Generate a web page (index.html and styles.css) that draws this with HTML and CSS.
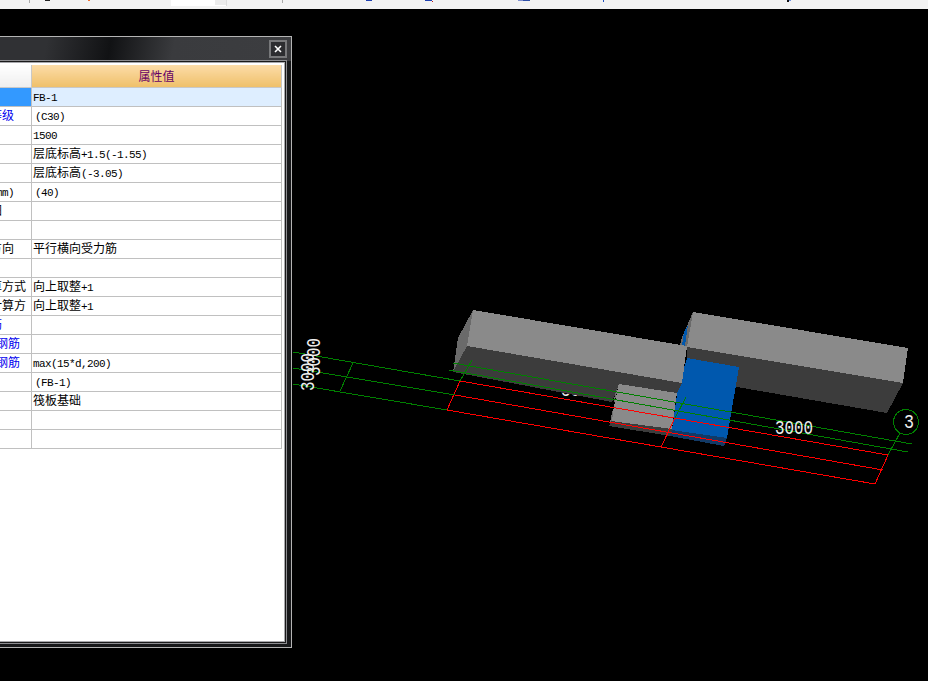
FILE: index.html
```html
<!DOCTYPE html>
<html lang="zh">
<head>
<meta charset="utf-8">
<title>属性编辑</title>
<link rel="stylesheet" href="styles.css">
</head>
<body>
<div class="toolbar">
  <svg class="toolbar-bits" viewBox="0 0 928 9" width="928" height="9">
    <rect x="171" y="0" width="55" height="6" fill="#fff"/>
    <rect x="215" y="0" width="11" height="5" fill="#ececec"/>
    <rect x="226" y="0" width="1" height="6" fill="#ddd"/>
    <rect x="29" y="0" width="1" height="3" fill="#aaa"/>
    <rect x="282" y="0" width="1" height="3" fill="#aaa"/>
    <rect x="45" y="0" width="5" height="1" fill="#222"/>
    <rect x="88" y="0" width="2" height="1" fill="#f07030"/>
    <rect x="366" y="0" width="6" height="1" fill="#2040b0"/>
    <rect x="425" y="0" width="7" height="1" fill="#2040b0"/>
    <rect x="432" y="1" width="1" height="1" fill="#c02020"/>
    <rect x="518" y="0" width="5" height="1" fill="#8090d0"/>
    <rect x="523" y="0" width="7" height="1" fill="#3050a8"/>
    <rect x="603" y="0" width="1" height="2" fill="#2050c0"/>
    <rect x="787" y="0" width="2" height="2" fill="#111"/>
    <rect x="789" y="0" width="2" height="1" fill="#7090e0"/>
  </svg>
</div>
<main class="viewport">
  <svg class="scene" viewBox="0 9 928 672" width="928" height="672">
    <text class="cad-text" x="561" y="396" textLength="38" lengthAdjust="spacingAndGlyphs">3000</text>
    <g class="aliased">
      <polygon fill="#3c3c3c" points="687,347 903,383 887,413 737,387 687,378"/>
      <polygon fill="#8a8a8a" points="693,312 908,348 903,383 687,347"/>
      <polygon fill="#6a6a6a" points="693,312 687,347 680,346 681,340"/>
      <polygon fill="#0058ae" points="688,325 685,346 682,345 684,332"/>
      <polygon fill="#123a66" points="672,430 727,438 724,446 670,436"/>
      <polygon fill="#8a8a8a" points="619,383 677,392 672,429 611,421"/>
      <polygon fill="#707070" points="619,383 615,392 612,422 610,422"/>
      <polygon fill="#3c3c3c" points="611,421 672,429 670,436 609,426"/>
      <polygon fill="#0058ae" points="687,358 739,367 727,438 672,430 678,388"/>
      <polygon fill="#3c3c3c" points="467,346 682,383 677,393 619,384 612,402 453,372"/>
      <polygon fill="#8a8a8a" points="473,310 687,346 682,383 467,346"/>
      <polygon fill="#6a6a6a" points="473,310 467,346 453,372 458,338"/>
    </g>
    <g class="aliased lines-red">
      <line x1="460" y1="381" x2="888" y2="455"/>
      <line x1="455" y1="395" x2="883" y2="470"/>
      <line x1="447" y1="410" x2="875" y2="484"/>
      <line x1="460" y1="381" x2="447" y2="410"/>
      <line x1="675" y1="418" x2="661" y2="447"/>
      <line x1="888" y1="455" x2="875" y2="484"/>
    </g>
    <g class="aliased lines-green">
      <line x1="293" y1="352" x2="460" y2="381"/>
      <line x1="293" y1="368" x2="455" y2="395"/>
      <line x1="293" y1="384" x2="447" y2="410"/>
      <line x1="353" y1="363" x2="340" y2="391"/>
      <line x1="453" y1="363" x2="912" y2="444"/>
      <line x1="449" y1="370" x2="908" y2="452"/>
      <line x1="472" y1="360" x2="460" y2="381"/>
      <line x1="686" y1="397" x2="675" y2="418"/>
      <line x1="900" y1="433" x2="888" y2="455"/>
      <circle cx="906" cy="422" r="12.5" fill="none"/>
    </g>
    <text class="cad-text" x="775" y="434" textLength="38" lengthAdjust="spacingAndGlyphs">3000</text>
    <text class="cad-text" x="904" y="428" textLength="10" lengthAdjust="spacingAndGlyphs">3</text>
    <text class="cad-text" transform="translate(314 391) rotate(-90)" textLength="38" lengthAdjust="spacingAndGlyphs">3000</text>
    <text class="cad-text" transform="translate(320 376) rotate(-90)" textLength="38" lengthAdjust="spacingAndGlyphs">3000</text>
  </svg>

  <section class="panel">
    <header class="panel-title">
      <button class="close" type="button" aria-label="关闭">
        <svg viewBox="0 0 8 8" width="8" height="8"><path d="M1 1 7 7M7 1 1 7" stroke="#fff" stroke-width="1.6"/></svg>
      </button>
    </header>
    <div class="panel-body">
      <table class="props">
        <colgroup><col class="col-name"><col class="col-value"></colgroup>
        <thead>
          <tr><th class="head-name">属性名称</th><th class="head-value">属性值</th></tr>
        </thead>
        <tbody>
          <tr class="selected"><td class="name">名称</td><td class="value"><span class="mono">FB-1</span></td></tr>
          <tr><td class="name link">混凝土强度等级</td><td class="value indent"><span class="mono">(C30)</span></td></tr>
          <tr><td class="name">厚度(mm)</td><td class="value"><span class="mono">1500</span></td></tr>
          <tr><td class="name">顶标高(m)</td><td class="value">层底标高<span class="mono">+1.5(-1.55)</span></td></tr>
          <tr><td class="name">底标高(m)</td><td class="value">层底标高<span class="mono">(-3.05)</span></td></tr>
          <tr><td class="name">保护层厚度<span class="mono">(mm)</span></td><td class="value indent"><span class="mono">(40)</span></td></tr>
          <tr><td class="name">马凳筋参数图</td><td class="value"></td></tr>
          <tr><td class="name">马凳筋信息</td><td class="value"></td></tr>
          <tr><td class="name">线形马凳筋方向</td><td class="value">平行横向受力筋</td></tr>
          <tr><td class="name">拉筋</td><td class="value"></td></tr>
          <tr><td class="name">拉筋数量计算方式</td><td class="value">向上取整<span class="mono">+1</span></td></tr>
          <tr><td class="name">马凳筋数量计算方</td><td class="value">向上取整<span class="mono">+1</span></td></tr>
          <tr><td class="name link">筏板侧面纵筋</td><td class="value"></td></tr>
          <tr><td class="name link"><span class="mono">U</span>形构造封边钢筋</td><td class="value"></td></tr>
          <tr><td class="name link"><span class="mono">U</span>形封边构造钢筋</td><td class="value"><span class="mono">max(15*d,200)</span></td></tr>
          <tr><td class="name">归类名称</td><td class="value indent"><span class="mono">(FB-1)</span></td></tr>
          <tr><td class="name">汇总信息</td><td class="value">筏板基础</td></tr>
          <tr><td class="name">备注</td><td class="value"></td></tr>
          <tr><td class="name">显示样式</td><td class="value"></td></tr>
        </tbody>
      </table>
    </div>
  </section>
</main>
</body>
</html>
```
FILE: styles.css
```css
* { box-sizing: border-box; }
html, body { margin: 0; height: 100%; background: #000; overflow: hidden; }
body {
  display: flex;
  flex-direction: column;
  width: 928px;
  height: 681px;
  font: 12px "Noto Sans CJK SC", sans-serif;
}
.toolbar { height: 9px; flex: none; background: #f3f3f3; }
.toolbar-bits { display: block; }
.viewport { position: relative; flex: 1; background: #000; overflow: hidden; }
.scene { display: block; }
.aliased { shape-rendering: crispEdges; }
.lines-red line { stroke: #ff0000; stroke-width: 1; }
.lines-green line, .lines-green circle { stroke: #008000; stroke-width: 1; }
.cad-text {
  font: 21px "Liberation Mono", monospace;
  fill: #eee;
}

.panel {
  position: absolute;
  left: -105px;
  top: 27px;
  width: 397px;
  height: 612px;
  display: flex;
  flex-direction: column;
  padding: 0 3px 3px 3px;
  border: 1px solid #b4b4b4;
  background: #17181a;
}
.panel-title {
  flex: none;
  height: 24px;
  padding: 3px 0 0 0;
  display: flex;
  justify-content: flex-end;
  align-items: flex-start;
  margin: 0 -3px;
  background: linear-gradient(100deg, #303134 0%, #303134 38%, #111214 54%, #3a3b3e 70%, #3c3d40 100%);
}
.close {
  width: 18px;
  height: 18px;
  margin-right: 4px;
  padding: 0;
  display: flex;
  align-items: center;
  justify-content: center;
  border: 2px solid #77787a;
  background: #2c2d30;
}
.panel-body {
  flex: 1;
  min-height: 0;
  padding: 2px 3px 0 0;
  background: #fff;
  border: 1px solid #a8a8ac;
  box-shadow: 0 0 0 1px #1a1a1a, 0 0 0 2px #8c8c90;
  margin: 1px 3px 2px 0;
}
.props {
  table-layout: fixed;
  border-collapse: collapse;
  width: 381px;
}
.col-name { width: 131px; }
.col-value { width: 250px; }
.props th {
  height: 22px;
  padding: 0;
  font-size: 12px;
  font-weight: 400;
  border: 1px solid #c8c8c8;
  border-top: 0;
}
.head-name { background: linear-gradient(#fff, #eee); color: #333; }
.head-value { background: linear-gradient(#fcdca8, #efc06a); color: #660066; }
.props td {
  height: 19px;
  padding: 0 0 2px 1px;
  line-height: 16px;
  color: #000;
  white-space: nowrap;
  overflow: hidden;
  border: 1px solid #c0c0c0;
  border-top: 0;
}
.props td.name { padding-left: 29px; }
.props td.indent { padding-left: 3px; }
.props td.link { color: #0000ee; }
.selected .name { background: #3399ff; color: #fff; }
.selected .value { background: #deeeff; }
.mono { font: 11px "Liberation Mono", monospace; letter-spacing: -0.6px; }
```
